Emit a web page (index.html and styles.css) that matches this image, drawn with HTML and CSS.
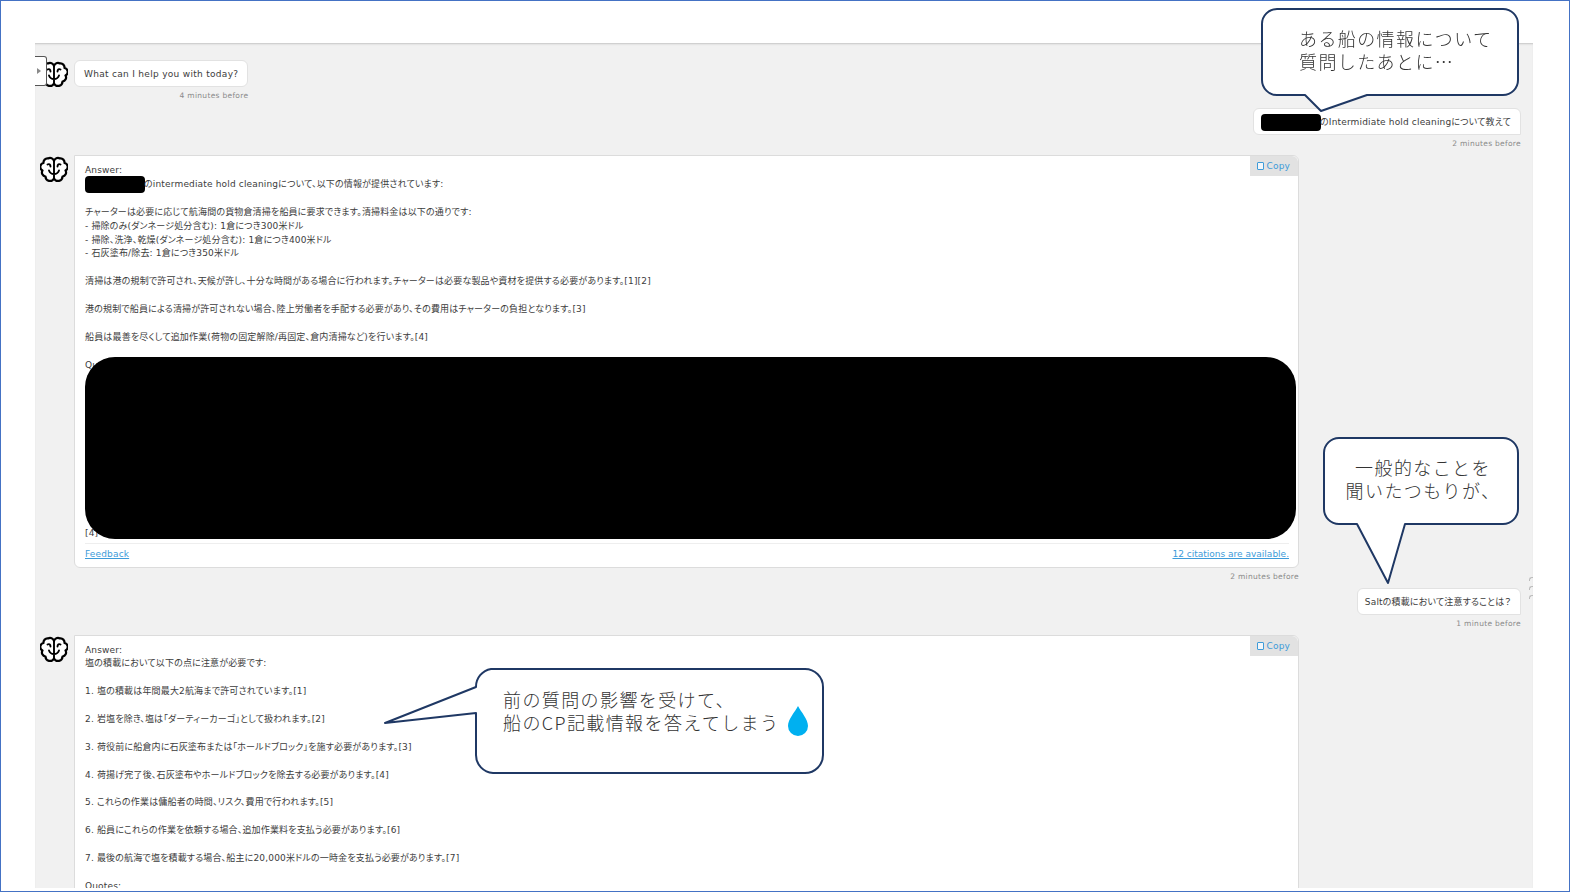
FILE: index.html
```html
<!DOCTYPE html>
<html lang="ja">
<head>
    <meta charset="UTF-8">
    <meta name="viewport" content="width=device-width, initial-scale=1.0">
    <title>Chat</title>
    <link rel="stylesheet" href="styles.css">
</head>
<body>
    <svg class="defs" width="0" height="0">
        <symbol id="brain" viewBox="0 0 28 28">
            <path d="M14 6A4 4 0 0 0 8 3.500A4 4 0 0 0 3.500 8A4 4 0 0 0 2.500 15.500A4 4 0 0 0 5.500 21.500A4.500 4.500 0 0 0 14 23.500A4.500 4.500 0 0 0 22.500 21.500A4 4 0 0 0 25.500 15.500A4 4 0 0 0 24.500 8A4 4 0 0 0 20 3.500A4 4 0 0 0 14 6Z" fill="#fff" stroke="#000" stroke-width="2.200" stroke-linejoin="round"/>
            <path d="M14 6V23M9 15.500C10 18.500 12 19 14 19C16 19 18 18.500 19 15.500M7.500 9.500C9 8.500 10.500 9.500 10.500 11.500M20.500 9.500C19 8.500 17.500 9.500 17.500 11.500" fill="none" stroke="#000" stroke-width="1.900" stroke-linecap="round"/>
        </symbol>
    </svg>

    <div class="frame">
        <main class="chat">
            <button class="side-toggle"><span class="arrow"></span></button>

            <div class="row">
                <svg class="avatar"><use href="#brain"/></svg>
                <div class="msg">
                    <div class="bubble greeting">What can I help you with today?</div>
                    <div class="time">4 minutes before</div>
                </div>
            </div>

            <div class="row-user first-user">
                <div class="bubble user-bubble"><span class="redact"></span>のIntermidiate hold cleaningについて教えて</div>
                <div class="time">2 minutes before</div>
            </div>

            <div class="row answer-row">
                <svg class="avatar"><use href="#brain"/></svg>
                <div class="msg wide">
                    <div class="card">
                        <a class="copy" href="#"><span class="clip"></span>Copy</a>
                        <div class="answer">Answer:
<span class="redact"></span>のintermediate hold cleaningについて、以下の情報が提供されています:

チャーターは必要に応じて航海間の貨物倉清掃を船員に要求できます。清掃料金は以下の通りです:
- 掃除のみ(ダンネージ処分含む): 1倉につき300米ドル
- 掃除、洗浄、乾燥(ダンネージ処分含む): 1倉につき400米ドル
- 石灰塗布/除去: 1倉につき350米ドル

清掃は港の規制で許可され、天候が許し、十分な時間がある場合に行われます。チャーターは必要な製品や資材を提供する必要があります。[1][2]

港の規制で船員による清掃が許可されない場合、陸上労働者を手配する必要があり、その費用はチャーターの負担となります。[3]

船員は最善を尽くして追加作業(荷物の固定解除/再固定、倉内清掃など)を行います。[4]

Quotes:</div>
                        <div class="quotes"><div class="redact-block"></div></div>
                        <div class="answer">[4]</div>
                        <div class="card-foot">
                            <a href="#">Feedback</a>
                            <a class="citations" href="#">12 citations are available.</a>
                        </div>
                    </div>
                    <div class="time">2 minutes before</div>
                </div>
            </div>

            <div class="row-user second-user">
                <div class="bubble user-bubble">Saltの積載において注意することは？</div>
                <div class="time">1 minute before</div>
            </div>

            <div class="row answer-row">
                <svg class="avatar"><use href="#brain"/></svg>
                <div class="msg wide">
                    <div class="card">
                        <a class="copy" href="#"><span class="clip"></span>Copy</a>
                        <div class="answer">Answer:
塩の積載において以下の点に注意が必要です:

1. 塩の積載は年間最大2航海まで許可されています。[1]

2. 岩塩を除き、塩は「ダーティーカーゴ」として扱われます。[2]

3. 荷役前に船倉内に石灰塗布または「ホールドブロック」を施す必要があります。[3]

4. 荷揚げ完了後、石灰塗布やホールドブロックを除去する必要があります。[4]

5. これらの作業は傭船者の時間、リスク、費用で行われます。[5]

6. 船員にこれらの作業を依頼する場合、追加作業料を支払う必要があります。[6]

7. 最後の航海で塩を積載する場合、船主に20,000米ドルの一時金を支払う必要があります。[7]

Quotes:</div>
                    </div>
                </div>
            </div>

            <div class="grip"><i></i><i></i><i></i></div>
        </main>

        <div class="callout callout-a">
            <svg width="260" height="106" viewBox="0 0 260 106">
                <path d="M16 1H242A15 15 0 0 1 257 16V72A15 15 0 0 1 242 87H106L60 103L44 87H16A15 15 0 0 1 1 72V16A15 15 0 0 1 16 1Z"/>
            </svg>
            <p>ある船の情報について<br>質問したあとに…</p>
        </div>

        <div class="callout callout-b">
            <svg width="198" height="150" viewBox="0 0 198 150">
                <path d="M16 1H180A15 15 0 0 1 195 16V72A15 15 0 0 1 180 87H82L65 146L34 87H16A15 15 0 0 1 1 72V16A15 15 0 0 1 16 1Z"/>
            </svg>
            <p>一般的なことを<br>聞いたつもりが、</p>
        </div>

        <div class="callout callout-c">
            <svg width="444" height="110" viewBox="0 0 444 110">
                <path d="M107 1H421A18 18 0 0 1 439 19V87A18 18 0 0 1 421 105H109A18 18 0 0 1 92 87V45L1 55L92 19A18 18 0 0 1 107 1Z"/>
            </svg>
            <p>前の質問の影響を受けて、<br>船のCP記載情報を答えてしまう</p>
            <svg class="drop" width="20" height="30" viewBox="0 0 20 30">
                <path d="M10 0C13 6 20 13 20 20A10 10 0 0 1 0 20C0 13 7 6 10 0Z"/>
            </svg>
        </div>
    </div>
</body>
</html>
```

FILE: styles.css
```css
:root {
    --chat-bg: #f1f1f1;
    --line: #dcdcdc;
    --muted: #8a8a8a;
    --text: #3c3c3c;
    --link: #3d9bd9;
    --callout: #1f3864;
}

html, body {
    margin: 0;
    background: #fff;
}

.defs {
    position: absolute;
}

.frame {
    position: relative;
    box-sizing: border-box;
    width: 1570px;
    height: 892px;
    padding: 42px 36px 3px 34px;
    border: 1px solid #4472c4;
    overflow: hidden;
    font-family: "DejaVu Sans", "Noto Sans CJK JP", sans-serif;
    font-size: 9px;
    letter-spacing: .16px;
    color: var(--text);
    font-feature-settings: "palt";
    filter: blur(.3px);
}

.chat {
    position: relative;
    height: 100%;
    padding: 17px 12px 0 5px;
    box-sizing: border-box;
    display: flex;
    flex-direction: column;
    overflow: hidden;
    background: var(--chat-bg);
    box-shadow: inset 0 2px 2px -1px #c4c4c4;
}

.side-toggle {
    position: absolute;
    top: 13px;
    left: 0;
    width: 12px;
    height: 30px;
    padding: 0;
    border: 1px solid #555;
    border-left: 0;
    border-radius: 0 3px 3px 0;
    background: #fff;
}

.arrow {
    display: block;
    margin-left: 2px;
    width: 0;
    height: 0;
    border-left: 4px solid #8a8a8a;
    border-top: 3px solid transparent;
    border-bottom: 3px solid transparent;
}

.row {
    display: flex;
    gap: 6px;
    flex-shrink: 0;
}

.avatar {
    width: 28px;
    height: 28px;
    flex: none;
}

.msg {
    display: flex;
    flex-direction: column;
}

.wide {
    width: 1225px;
}

.bubble {
    padding: 0 9px;
    height: 27px;
    line-height: 27px;
    box-sizing: border-box;
    background: #fff;
    border: 1px solid #e2e2e2;
    border-radius: 6px;
    white-space: nowrap;
}

.greeting {
    letter-spacing: .3px;
}

.time {
    margin-top: 4px;
    height: 10px;
    line-height: 10px;
    font-size: 7.5px;
    letter-spacing: .3px;
    color: var(--muted);
    text-align: right;
}

.row-user {
    display: flex;
    flex-direction: column;
    align-items: flex-end;
    flex-shrink: 0;
}

.first-user {
    margin-top: 7px;
}

.second-user {
    margin-top: 6px;
}

.user-bubble {
    padding: 0 9px 0 7px;
    border-radius: 6px 6px 0 6px;
}

.answer-row {
    margin-top: 6px;
}

.redact {
    display: inline-block;
    width: 60px;
    height: 17px;
    margin: -4px -1px -4px 0;
    vertical-align: middle;
    border-radius: 4px;
    background: #000;
}

.card {
    position: relative;
    box-sizing: border-box;
    padding: 8px 9px 6px 10px;
    background: #fff;
    border: 1px solid var(--line);
    border-radius: 0 6px 6px 6px;
}

.copy {
    position: absolute;
    top: 0;
    right: 0;
    display: flex;
    align-items: center;
    gap: 3px;
    height: 20px;
    padding: 0 8px 0 7px;
    border-radius: 0 6px 0 0;
    background: #e2e2e2;
    color: var(--link);
    text-decoration: none;
}

.clip {
    width: 5px;
    height: 6px;
    border: 1.5px solid var(--link);
    border-radius: 1px;
    background: #f2f6fa;
}

.answer {
    white-space: pre-line;
    line-height: 13.9px;
}

.quotes {
    height: 154px;
    position: relative;
}

.redact-block {
    position: absolute;
    top: -16px;
    left: 0;
    right: -7px;
    height: 182px;
    border-radius: 30px;
    background: #000;
}

.card-foot {
    display: flex;
    justify-content: space-between;
    margin-top: 2px;
    padding-top: 4px;
    border-top: 1px solid #eee;
    line-height: 13px;
}

.card-foot a {
    color: var(--link);
}

.card-foot .citations {
    letter-spacing: 0;
}

.grip {
    position: absolute;
    right: 0;
    top: 534px;
    display: flex;
    flex-direction: column;
    gap: 5px;
}

.grip i {
    display: block;
    width: 3px;
    height: 3px;
    border-top: 1px solid #bbb;
    border-left: 1px solid #bbb;
    border-radius: 3px 0 0 0;
}

.callout {
    position: absolute;
}

.callout svg {
    display: block;
}

.callout path {
    fill: #fff;
    stroke: var(--callout);
    stroke-width: 2;
    stroke-linejoin: round;
}

.callout p {
    position: absolute;
    margin: 0;
    font-family: "Noto Sans CJK JP", "Noto Sans", sans-serif;
    font-weight: 300;
    font-size: 18px;
    line-height: 23px;
    letter-spacing: 1.4px;
    color: #333;
    font-feature-settings: normal;
    white-space: nowrap;
}

.callout-a {
    left: 1260px;
    top: 7px;
}

.callout-a p {
    left: 38px;
    top: 19px;
}

.callout-b {
    left: 1322px;
    top: 436px;
}

.callout-b p {
    left: 2px;
    width: 196px;
    top: 19px;
    text-align: center;
}

.callout-c {
    left: 383px;
    top: 667px;
}

.callout-c p {
    left: 119px;
    top: 20px;
}

.callout-c .drop {
    position: absolute;
    left: 404px;
    top: 38px;
}

.callout-c .drop path {
    fill: #00b0f0;
    stroke: none;
}
```
